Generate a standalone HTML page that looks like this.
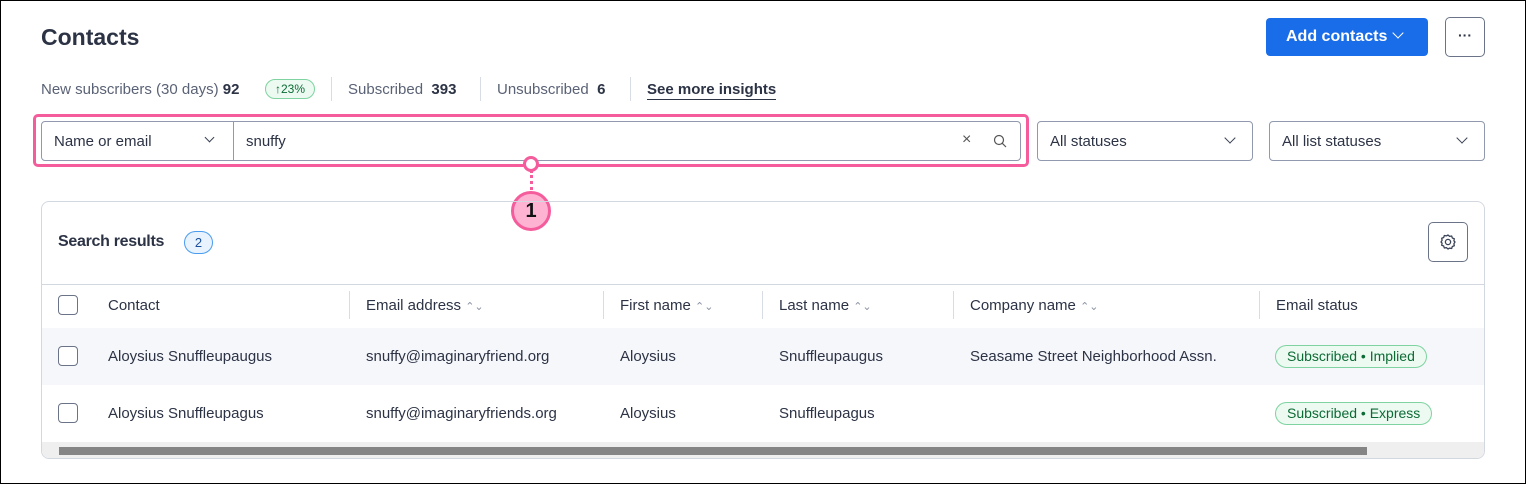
<!DOCTYPE html>
<html><head><style>
*{box-sizing:border-box;margin:0;padding:0}
body{width:1526px;height:484px;background:#fff;font-family:"Liberation Sans",sans-serif;color:#2c3345;position:relative;overflow:hidden}
.frame{position:absolute;left:0;top:0;width:1526px;height:484px;border:1px solid #000;z-index:9;pointer-events:none}
.a{position:absolute}
.t{font-size:15px;white-space:nowrap}
.g{color:#5a6275}
.sel{position:absolute;border:1px solid #9099ad;border-radius:4px;height:40px;background:#fff}
.chev{position:absolute;width:8px;height:8px;border-right:1.5px solid #3a4256;border-bottom:1.5px solid #3a4256;transform:rotate(45deg)}
.cb{position:absolute;left:58px;width:20px;height:20px;border:1.5px solid #6a7387;border-radius:4px;background:#fff}
.sep{position:absolute;top:291px;width:1px;height:28px;background:#d8dce4}
.pill{position:absolute;left:1275px;height:23px;border:1px solid #7ed3a0;background:#ecfaf1;color:#0c6b35;border-radius:12px;font-size:14px;padding:2px 11px;white-space:nowrap}
.sort{color:#8a91a3;font-size:11px}
</style></head><body>
<div class="frame"></div>
<div class="a" style="left:41px;top:24px;font-size:23px;font-weight:bold;color:#2c3345">Contacts</div>
<div class="a t" style="left:1266px;top:18px;width:162px;height:38px;background:#1a6de8;border-radius:4px;color:#fff;font-size:16px;font-weight:bold;padding:10px 0 0 20px">Add contacts</div>
<div class="chev" style="left:1394px;top:29px;border-color:#fff"></div>
<div class="a" style="left:1445px;top:17px;width:40px;height:40px;border:1px solid #6a7387;border-radius:5px;text-align:center;font-size:14px;font-weight:bold;line-height:34px">···</div>

<div class="a t g" style="left:41px;top:81px">New subscribers (30 days) <b style="color:#2c3345">92</b></div>
<div class="a" style="left:265px;top:79px;width:50px;height:20px;border:1px solid #7ed3a0;background:#ecfaf1;border-radius:10px;font-size:12px;color:#0c6b35;text-align:center;line-height:18px">↑23%</div>
<div class="a" style="left:331px;top:77px;width:1px;height:24px;background:#d8dce4"></div>
<div class="a t g" style="left:348px;top:81px">Subscribed&nbsp; <b style="color:#2c3345">393</b></div>
<div class="a" style="left:480px;top:77px;width:1px;height:24px;background:#d8dce4"></div>
<div class="a t g" style="left:497px;top:81px">Unsubscribed&nbsp; <b style="color:#2c3345">6</b></div>
<div class="a" style="left:630px;top:77px;width:1px;height:24px;background:#d8dce4"></div>
<div class="a t" style="left:647px;top:81px;font-weight:bold;border-bottom:1.5px solid #2c3345;padding-bottom:1px">See more insights</div>

<div class="a" style="left:33px;top:114px;width:996px;height:53px;border:3px solid #f45c9b;border-radius:5px"></div>
<div class="sel" style="left:41px;top:121px;width:980px"></div>
<div class="a" style="left:233px;top:122px;width:1px;height:38px;background:#9099ad"></div>
<div class="a t" style="left:54px;top:133px">Name or email</div>
<div class="chev" style="left:206px;top:134px;width:7px;height:7px;border-width:1px"></div>
<div class="a t" style="left:246px;top:133px">snuffy</div>
<div class="a" style="left:962px;top:131px;font-size:16px;color:#555">×</div>
<svg class="a" style="left:993px;top:134px" width="14" height="14"><circle cx="6" cy="6" r="4.5" fill="none" stroke="#555" stroke-width="1.2"/><line x1="9.3" y1="9.3" x2="13" y2="13" stroke="#555" stroke-width="1.2"/></svg>

<div class="sel" style="left:1037px;top:121px;width:216px"></div>
<div class="a t" style="left:1050px;top:133px">All statuses</div>
<div class="chev" style="left:1226px;top:134px"></div>
<div class="sel" style="left:1269px;top:121px;width:216px"></div>
<div class="a t" style="left:1282px;top:133px">All list statuses</div>
<div class="chev" style="left:1458px;top:134px"></div>

<div class="a" style="left:531px;top:170px;width:0;height:20px;border-left:3px dotted #f45c9b;margin-left:-1px"></div>
<div class="a" style="left:523px;top:156px;width:16px;height:16px;border-radius:50%;background:#fff;border:3px solid #f45c9b"></div>
<div class="a" style="left:511px;top:191px;width:40px;height:40px;border-radius:50%;background:#ffb3d3;border:3px solid #f45c9b;text-align:center;font-size:20px;font-weight:bold;line-height:34px;color:#111">1</div>

<div class="a" style="left:41px;top:201px;width:1444px;height:258px;border:1px solid #d3d8e0;border-radius:8px;overflow:hidden">
 <div class="a" style="left:0;top:82px;width:1444px;height:1px;background:#d3d8e0"></div>
 <div class="a" style="left:0;top:126px;width:1444px;height:57px;background:#f6f7fb"></div>
 <div class="a" style="left:0;top:240px;width:1444px;height:16px;background:#efefef"></div>
 <div class="a" style="left:17px;top:245px;width:1308px;height:8px;background:#858585"></div>
</div>
<div class="a t" style="left:58px;top:233px;font-size:16px;font-weight:bold;letter-spacing:-0.3px">Search results</div>
<div class="a" style="left:184px;top:231px;width:29px;height:23px;border:1px solid #4a9cf0;background:#e8f3fe;border-radius:12px;text-align:center;font-size:13px;line-height:21px;color:#1a4f9c">2</div>
<div class="a" style="left:1428px;top:222px;width:40px;height:40px;border:1px solid #6a7387;border-radius:5px"></div>
<svg class="a" style="left:1438px;top:232px" width="20" height="20" viewBox="0 0 20 20"><circle cx="10" cy="10" r="2.6" fill="none" stroke="#3a4256" stroke-width="1.3"/><path d="M10 3l1.6 1.4 2.1-.4.6 2 2 .7-.4 2.1L17 10l-1.1 1.7.4 2.1-2 .7-.6 2-2.1-.4L10 17l-1.6-1.4-2.1.4-.6-2-2-.7.4-2.1L3 10l1.1-1.7-.4-2.1 2-.7.6-2 2.1.4z" fill="none" stroke="#3a4256" stroke-width="1.3" stroke-linejoin="round"/></svg>

<div class="cb" style="top:295px"></div>
<div class="a t" style="left:108px;top:297px">Contact</div>
<div class="sep" style="left:349px"></div>
<div class="a t" style="left:366px;top:297px">Email address <span class="sort">⌃⌄</span></div>
<div class="sep" style="left:603px"></div>
<div class="a t" style="left:620px;top:297px">First name <span class="sort">⌃⌄</span></div>
<div class="sep" style="left:762px"></div>
<div class="a t" style="left:779px;top:297px">Last name <span class="sort">⌃⌄</span></div>
<div class="sep" style="left:953px"></div>
<div class="a t" style="left:970px;top:297px">Company name <span class="sort">⌃⌄</span></div>
<div class="sep" style="left:1259px"></div>
<div class="a t" style="left:1276px;top:297px">Email status</div>

<div class="cb" style="top:346px"></div>
<div class="a t" style="left:108px;top:348px">Aloysius Snuffleupaugus</div>
<div class="a t" style="left:366px;top:348px">snuffy@imaginaryfriend.org</div>
<div class="a t" style="left:620px;top:348px">Aloysius</div>
<div class="a t" style="left:779px;top:348px">Snuffleupaugus</div>
<div class="a t" style="left:970px;top:348px">Seasame Street Neighborhood Assn.</div>
<div class="pill" style="top:345px">Subscribed • Implied</div>

<div class="cb" style="top:403px"></div>
<div class="a t" style="left:108px;top:405px">Aloysius Snuffleupagus</div>
<div class="a t" style="left:366px;top:405px">snuffy@imaginaryfriends.org</div>
<div class="a t" style="left:620px;top:405px">Aloysius</div>
<div class="a t" style="left:779px;top:405px">Snuffleupagus</div>
<div class="pill" style="top:402px">Subscribed • Express</div>
</body></html>
